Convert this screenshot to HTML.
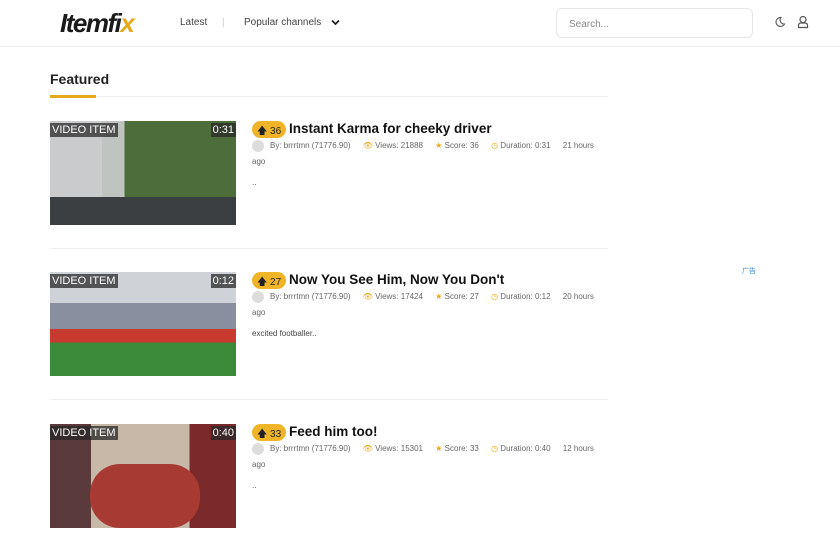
<!DOCTYPE html>
<html><head><meta charset="utf-8"><style>
*{margin:0;padding:0;box-sizing:border-box}
body{width:840px;height:540px;overflow:hidden;background:#fff;font-family:"Liberation Sans",sans-serif;color:#222;position:relative}
.hdr{position:absolute;left:0;top:0;width:840px;height:47px;border-bottom:1px solid #eee}
.logo{position:absolute;left:60px;top:8px;font-size:26px;font-weight:bold;font-style:italic;letter-spacing:-1.5px;color:#1a1a1a}
.nav{position:absolute;top:17px;font-size:10px;color:#444}
.search{position:absolute;left:556px;top:8px;width:197px;height:30px;border:1px solid #e6e6e6;border-radius:6px;font-size:10px;color:#888;padding:10px 12px}
h2{position:absolute;left:50px;top:71px;font-size:14px;font-weight:bold}
.uline{position:absolute;left:50px;top:96px;width:558px;height:1px;background:#eee}
.uline b{position:absolute;left:0;top:-1px;width:46px;height:3px;background:#e6a91c}
.item{position:absolute;left:50px;width:558px}
.th{position:absolute;left:0;top:0;width:186px;height:104px;overflow:hidden}
.vi{position:absolute;left:0;top:2px;background:rgba(40,40,40,.75);color:#fff;font-size:11px;padding:1px 2px}
.du{position:absolute;right:0;top:2px;background:rgba(40,40,40,.75);color:#fff;font-size:11px;padding:1px 2px}
.badge{position:absolute;left:202px;top:0;background:#f0b429;border-radius:9px;height:17px;width:34px;font-size:10px;padding:3px 0 0 5px;color:#222}
.title{position:absolute;left:239px;top:0;font-size:13.5px;font-weight:bold;color:#111}
.meta{position:absolute;left:202px;top:17px;width:380px;font-size:8px;color:#666;line-height:16px}
.meta span.g{margin-right:10px}
.av{display:inline-block;width:12px;height:12px;border-radius:50%;background:#ddd;vertical-align:middle;margin-right:6px}
.o{color:#e6a91c}
.desc{position:absolute;left:202px;top:57px;font-size:8px;color:#444}
.sep{position:absolute;left:0;top:127px;width:558px;height:1px;background:#eee}
</style></head><body>
<div class="hdr">
<div class="logo">Itemfi<span style="color:#e6a91c">x</span></div>
<div class="nav" style="left:180px">Latest</div>
<div class="nav" style="left:222px;color:#ccc">|</div>
<div class="nav" style="left:244px">Popular channels</div>
<svg style="position:absolute;left:331px;top:19px" width="9" height="7" viewBox="0 0 9 7"><path d="M1 1.5L4.5 5L8 1.5" stroke="#222" stroke-width="1.8" fill="none"/></svg>
<div class="search">Search...</div>
<svg style="position:absolute;left:774px;top:16px" width="12" height="12" viewBox="0 0 12 12"><path d="M7 1.5A4.5 4.5 0 1 0 10.5 8 4 4 0 0 1 7 1.5Z" stroke="#555" stroke-width="1.1" fill="none"/></svg>
<svg style="position:absolute;left:797px;top:15px" width="12" height="14" viewBox="0 0 12 14"><circle cx="6" cy="4.5" r="3" stroke="#555" stroke-width="1.2" fill="none"/><path d="M1.5 12.5V10.5Q1.5 8 4 8H8Q10.5 8 10.5 10.5V12.5Z" stroke="#555" stroke-width="1.2" fill="none"/></svg>
</div>
<h2>Featured</h2>
<div class="uline"><b></b></div>
<div style="position:absolute;left:742px;top:266px;font-size:7px;color:#3a8fd6">广告</div>

<div class="item" style="top:121px">
<div class="th" style="background:linear-gradient(90deg,#c9cbcd 0 28%,#bfc4c0 28% 40%,#4d6e3a 40% 100%)"><div style="position:absolute;left:0;bottom:0;width:186px;height:28px;background:#3c3f42"></div><span class="vi">VIDEO ITEM</span><span class="du">0:31</span></div>
<div class="badge">🡅 36</div><div class="title">Instant Karma for cheeky driver</div>
<div class="meta"><span class="av"></span><span class="g">By: brrrtmn (71776.90)</span> <span class="g"><span class="o">👁</span> Views: 21888</span> <span class="g"><span class="o">★</span> Score: 36</span> <span class="g"><span class="o">◷</span> Duration: 0:31</span> 21 hours<br>ago</div>
<div class="desc">..</div>
<div class="sep"></div>
</div>

<div class="item" style="top:272px">
<div class="th" style="background:linear-gradient(180deg,#cfd3d8 0 30%,#8a8fa0 30% 55%,#c93a2e 55% 68%,#3a8a3a 68% 100%)"><span class="vi">VIDEO ITEM</span><span class="du">0:12</span></div>
<div class="badge">🡅 27</div><div class="title">Now You See Him, Now You Don't</div>
<div class="meta"><span class="av"></span><span class="g">By: brrrtmn (71776.90)</span> <span class="g"><span class="o">👁</span> Views: 17424</span> <span class="g"><span class="o">★</span> Score: 27</span> <span class="g"><span class="o">◷</span> Duration: 0:12</span> 20 hours<br>ago</div>
<div class="desc">excited footballer..</div>
<div class="sep"></div>
</div>

<div class="item" style="top:424px">
<div class="th" style="background:linear-gradient(90deg,#5a3a3a 0 22%,#c8b8a8 22% 75%,#7a2a2a 75% 100%)"><div style="position:absolute;left:40px;top:40px;width:110px;height:64px;background:#a83a34;border-radius:30px"></div><span class="vi">VIDEO ITEM</span><span class="du">0:40</span></div>
<div class="badge">🡅 33</div><div class="title">Feed him too!</div>
<div class="meta"><span class="av"></span><span class="g">By: brrrtmn (71776.90)</span> <span class="g"><span class="o">👁</span> Views: 15301</span> <span class="g"><span class="o">★</span> Score: 33</span> <span class="g"><span class="o">◷</span> Duration: 0:40</span> 12 hours<br>ago</div>
<div class="desc">..</div>
</div>
</body></html>
